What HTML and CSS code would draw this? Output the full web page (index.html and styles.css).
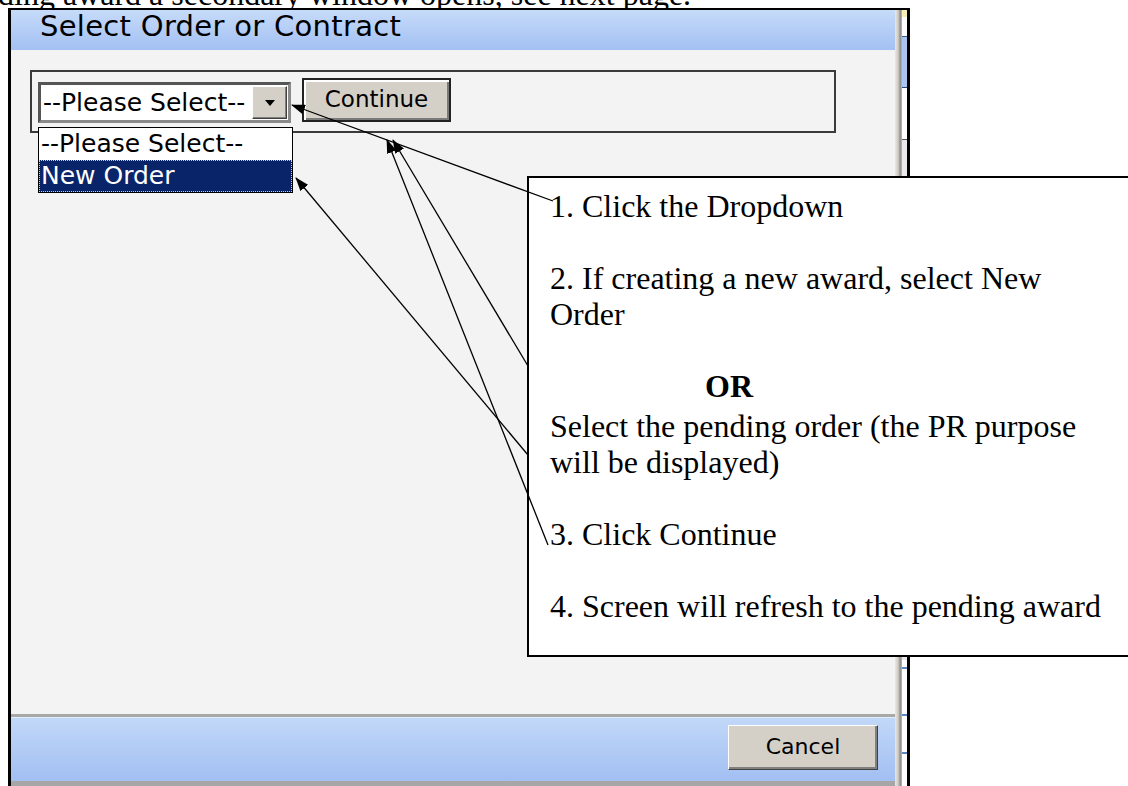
FILE: index.html
```html
<!DOCTYPE html>
<html lang="en">
<head>
<meta charset="utf-8">
<title>Select Order or Contract</title>
<link rel="stylesheet" href="styles.css">
</head>
<body>
  <div class="doc-line"><p>ding award a secondary window opens, see next page.</p></div>

  <div class="shot">
    <div class="dialog">
      <div class="titlebar"><span class="title">Select Order or Contract</span></div>

      <div class="content">
        <div class="picker">
          <div class="select">
            <span class="value">--Please Select--</span>
            <span class="drop-btn">
              <svg width="10" height="6" viewBox="0 0 10 6"><path d="M0 0h10L5 6z" fill="#000"/></svg>
            </span>
          </div>
          <button class="btn btn-default" type="button">Continue</button>
        </div>

        <ul class="listbox">
          <li>--Please Select--</li>
          <li class="selected">New Order</li>
        </ul>
      </div>

      <div class="footer">
        <button class="btn" type="button">Cancel</button>
      </div>
    </div>

    <div class="edge">
      <div class="scroll"></div>
      <div class="behind">
        <div class="seg seg-yellow"></div>
        <div class="seg seg-white"></div>
        <div class="seg seg-blue"></div>
        <div class="seg seg-white2"></div>
        <div class="seg seg-gray"></div>
        <div class="seg seg-rest"></div>
      </div>
    </div>
  </div>

  <div class="callout">
    <p>1. Click the Dropdown</p>
    <p>2. If creating a new award, select New<br>Order</p>
    <p class="or">OR</p>
    <p class="alt">Select the pending order (the PR purpose<br>will be displayed)</p>
    <p>3. Click Continue</p>
    <p>4. Screen will refresh to the pending award</p>
  </div>

  <svg class="arrows" width="1128" height="786" viewBox="0 0 1128 786">
    <defs>
      <marker id="head" viewBox="0 0 14 10" refX="13" refY="5" markerWidth="14" markerHeight="10" markerUnits="userSpaceOnUse" orient="auto">
        <path d="M0 0L14 5L0 10z" fill="#000"/>
      </marker>
    </defs>
    <g stroke="#000" stroke-width="1.3" fill="none" marker-end="url(#head)">
      <line x1="553" y1="201" x2="292" y2="105"/>
      <line x1="528" y1="455" x2="296" y2="178"/>
      <line x1="528" y1="366" x2="393" y2="140"/>
      <line x1="548" y1="545" x2="387" y2="140"/>
    </g>
  </svg>
</body>
</html>
```

FILE: styles.css
```css
html, body {
  margin: 0;
  padding: 0;
}

body {
  position: relative;
  width: 1128px;
  height: 786px;
  overflow: hidden;
  background: #fff;
  font-family: "Liberation Serif", "Times New Roman", serif;
  color: #000;
}

/* Sentence of the document, cut off by the top of the page */
.doc-line {
  height: 8px;
  overflow: hidden;
}

.doc-line p {
  margin: -24px 0 0 -2px;
  font-size: 32px;
  line-height: 36px;
  white-space: nowrap;
}

/* Captured window */
.shot {
  display: flex;
  margin-left: 8px;
  width: 902px;
  height: 778px;
  box-sizing: border-box;
  border-top: 2px solid #000;
  border-left: 3px solid #000;
  border-right: 3px solid #000;
  overflow: hidden;
}

.dialog {
  display: flex;
  flex-direction: column;
  width: 884px;
  font-family: "DejaVu Sans", Verdana, sans-serif;
}

.titlebar {
  height: 40px;
  padding-left: 29px;
  background: linear-gradient(#c6dbf9, #a2c0f3);
}

.title {
  display: block;
  font-size: 29px;
  line-height: 29px;
  letter-spacing: 0.3px;
  padding-top: 2px;
}

.content {
  position: relative;
  height: 664px;
  background: #f3f3f3;
  padding: 20px 0 0 19px;
  box-sizing: border-box;
}

.picker {
  display: flex;
  align-items: flex-start;
  gap: 11px;
  width: 806px;
  height: 63px;
  box-sizing: border-box;
  border: 2px solid #3a3a3a;
  padding: 6px 0 0 6px;
}

.select {
  display: flex;
  align-items: center;
  justify-content: space-between;
  width: 253px;
  height: 41px;
  margin-top: 4px;
  box-sizing: border-box;
  background: #fff;
  border: 3px solid;
  border-color: #555 #8a8a8a #8a8a8a #555;
  padding: 0 1px 0 2px;
}

.value {
  font-size: 25px;
  line-height: 30px;
  white-space: nowrap;
}

.drop-btn {
  display: flex;
  align-items: center;
  justify-content: center;
  width: 35px;
  height: 33px;
  box-sizing: border-box;
  background: #d4d0c8;
  border: 1px solid;
  border-color: #fff #404040 #404040 #fff;
  box-shadow: inset -1px -1px #808080;
}

.btn {
  display: block;
  margin: 0;
  padding: 0 0 2px;
  box-sizing: border-box;
  background: #d4d0c8;
  color: #000;
  font-family: "DejaVu Sans", Verdana, sans-serif;
  font-size: 23px;
  border: 1px solid;
  border-color: #fff #404040 #404040 #fff;
  box-shadow: inset -2px -2px #808080;
}

.btn-default {
  width: 149px;
  height: 44px;
  border: 2px solid #222;
  box-shadow: inset 2px 2px #fff, inset -2px -2px #7a7a7a;
}

/* Opened dropdown list, drawn over the group box */
.listbox {
  position: absolute;
  left: 27px;
  top: 77px;
  width: 255px;
  margin: 0;
  padding: 0;
  list-style: none;
  box-sizing: border-box;
  background: #fff;
  border: 1px solid #000;
  font-size: 25px;
}

.listbox li {
  height: 32px;
  line-height: 31px;
  padding-left: 2px;
  white-space: nowrap;
  box-sizing: border-box;
}

.listbox li.selected {
  background: #0a246a;
  color: #fff;
  outline: 1px dotted #e8d070;
  outline-offset: -1px;
}

.footer {
  display: flex;
  justify-content: flex-end;
  align-items: flex-start;
  height: 72px;
  box-sizing: border-box;
  border-top: 3px solid #a8a8a8;
  border-bottom: 5px solid #a6a6a6;
  padding: 8px 17px 0 0;
  background: linear-gradient(#c2d8f8, #a2bff2);
  box-shadow: inset 0 1px #e2ecfa;
}

.footer .btn {
  width: 150px;
  height: 45px;
  font-size: 22px;
}

/* Strip of the window behind, at the right side */
.edge {
  display: flex;
  width: 12px;
}

.scroll {
  width: 7px;
  background: linear-gradient(to right, #ebe8e2, #cfcbc3 45%, #8d8d8d 75%, #b9b9b9);
}

.behind {
  display: flex;
  flex-direction: column;
  width: 5px;
  background: #fff;
}

.seg-yellow { height: 7px; background: #f6efb8; }
.seg-white { height: 19px; background: #fff; border-bottom: 1px solid #3c5a88; }
.seg-blue { height: 50px; background: #a9c6f2; border-bottom: 1px solid #2e4470; }
.seg-white2 { height: 51px; background: #fff; border-bottom: 1px solid #555; }
.seg-gray { height: 520px; background: #e9e9e9; }
.seg-rest {
  flex: 1;
  background:
    linear-gradient(#5b86c4, #5b86c4) 0 7px / 5px 2px no-repeat,
    linear-gradient(#5b86c4, #5b86c4) 0 54px / 5px 2px no-repeat,
    linear-gradient(#5b86c4, #5b86c4) 0 92px / 5px 2px no-repeat,
    #fff;
}

/* Instruction callout placed over the screenshot */
.callout {
  position: absolute;
  left: 527px;
  top: 176px;
  width: 640px;
  height: 481px;
  box-sizing: border-box;
  background: #fff;
  border: 2px solid #000;
  padding: 10px 0 0 21px;
  font-size: 32px;
  line-height: 36px;
  white-space: nowrap;
}

.callout p {
  margin: 0 0 36px;
}

.callout p.or {
  margin: 0;
  padding-left: 155px;
  font-weight: bold;
}

.callout p.alt {
  margin-top: 4px;
}

.arrows {
  position: absolute;
  left: 0;
  top: 0;
  pointer-events: none;
}
```
